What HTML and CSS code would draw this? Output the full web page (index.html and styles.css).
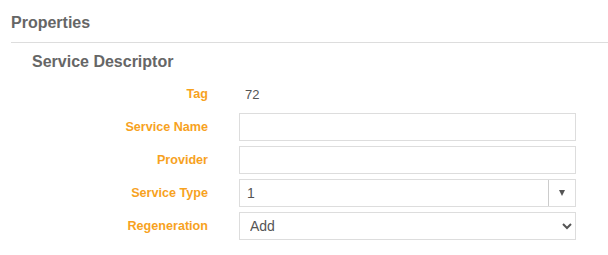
FILE: index.html
```html
<!DOCTYPE html>
<html>
<head>
<meta charset="utf-8">
<link rel="stylesheet" href="styles.css">
</head>
<body>
<div class="panel">
  <h2 class="panel-title">Properties</h2>
  <div class="section">
    <h3 class="section-title">Service Descriptor</h3>
    <div class="form">
      <label class="label">Tag</label>
      <div class="value">72</div>

      <label class="label">Service Name</label>
      <input class="input" type="text">

      <label class="label">Provider</label>
      <input class="input" type="text">

      <label class="label">Service Type</label>
      <div class="combo">
        <span class="combo-text">1</span>
        <span class="combo-btn"><span class="tri"></span></span>
      </div>

      <label class="label">Regeneration</label>
      <select class="select">
        <option>Add</option>
      </select>
    </div>
  </div>
</div>
</body>
</html>
```

FILE: styles.css
```css
html, body {
  margin: 0;
  padding: 0;
  background: #fff;
}
body {
  font-family: "Liberation Sans", Arial, sans-serif;
  color: #555;
}
.panel {
  padding: 13px 0 0 11px;
}
.panel-title {
  margin: 0;
  font-size: 16px;
  line-height: 20px;
  font-weight: bold;
  color: #666;
  padding-bottom: 9px;
  border-bottom: 1px solid #ddd;
}
.section {
  padding-left: 21px;
}
.section-title {
  margin: 9px 0 0 0;
  font-size: 16px;
  line-height: 20px;
  font-weight: bold;
  color: #666;
}
.form {
  margin-top: 8px;
  display: grid;
  grid-template-columns: 176px 337px;
  column-gap: 31px;
  row-gap: 5px;
  grid-auto-rows: 28px;
  align-items: center;
}
.label {
  text-align: right;
  font-size: 12.6px;
  font-weight: bold;
  color: #f7a21e;
}
.value {
  padding-left: 6px;
  font-size: 13px;
  color: #555;
}
.input {
  box-sizing: border-box;
  width: 337px;
  height: 28px;
  margin: 0;
  border: 1px solid #ddd;
  border-radius: 0;
  outline: none;
  font-family: inherit;
  font-size: 14px;
  padding: 0 7px;
}
.combo {
  box-sizing: border-box;
  width: 337px;
  height: 28px;
  border: 1px solid #ddd;
  display: flex;
  align-items: center;
}
.combo-text {
  flex: 1;
  padding-left: 7px;
  font-size: 14px;
  color: #555;
}
.combo-btn {
  width: 26px;
  height: 100%;
  border-left: 1px solid #ccc;
  display: flex;
  align-items: center;
  justify-content: center;
}
.tri {
  width: 0;
  height: 0;
  border-left: 3px solid transparent;
  border-right: 3px solid transparent;
  border-top: 6px solid #555;
}
.select {
  box-sizing: border-box;
  width: 337px;
  height: 28px;
  margin: 0;
  border: 1px solid #ddd;
  border-radius: 0;
  background: #fff;
  font-family: inherit;
  font-size: 14px;
  color: #555;
  padding: 0 6px;
  outline: none;
}
```
